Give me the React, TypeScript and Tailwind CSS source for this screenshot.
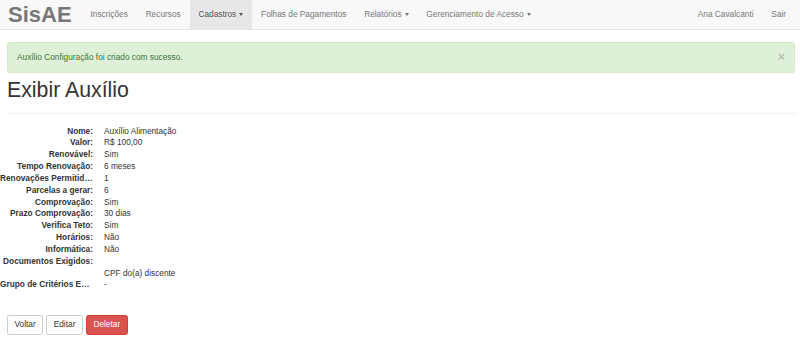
const navLeft = [
  { label: "Inscrições" },
  { label: "Recursos" },
  { label: "Cadastros", caret: true, active: true },
  { label: "Folhas de Pagamentos" },
  { label: "Relatórios", caret: true },
  { label: "Gerenciamento de Acesso", caret: true },
];

const fields: [string, string][] = [
  ["Nome:", "Auxílio Alimentação"],
  ["Valor:", "R$ 100,00"],
  ["Renovável:", "Sim"],
  ["Tempo Renovação:", "6 meses"],
  ["Renovações Permitidas:", "1"],
  ["Parcelas a gerar:", "6"],
  ["Comprovação:", "Sim"],
  ["Prazo Comprovação:", "30 dias"],
  ["Verifica Teto:", "Sim"],
  ["Horários:", "Não"],
  ["Informática:", "Não"],
  ["Documentos Exigidos:", ""],
  ["", "CPF do(a) discente"],
  ["Grupo de Critérios Especiais:", "-"],
];

function Caret() {
  return (
    <span className="ml-[3px] inline-block h-0 w-0 border-x-[2.5px] border-t-[3px] border-x-transparent border-t-current align-middle" />
  );
}

export default function App() {
  return (
    <div className="h-[342px] w-[800px] overflow-hidden bg-white font-['Liberation_Sans',Arial,sans-serif] text-[8.3px] leading-[11.85px] text-[#333]">
      <nav className="flex h-[30px] items-stretch border-b border-[#e7e7e7] bg-[#f8f8f8] pr-[5px] text-[#777]">
        <a className="flex items-center px-[8px] text-[22px] font-bold leading-none text-[#777]">SisAE</a>
        <ul className="flex items-stretch pl-[2px]">
          {navLeft.map((item) => (
            <li
              key={item.label}
              className={`flex items-center px-[8.9px] ${item.active ? "bg-[#e7e7e7] text-[#555]" : ""}`}
            >
              {item.label}
              {item.caret && <Caret />}
            </li>
          ))}
        </ul>
        <ul className="ml-auto flex items-stretch">
          <li className="flex items-center px-[8.9px]">Ana Cavalcanti</li>
          <li className="flex items-center px-[8.9px]">Sair</li>
        </ul>
      </nav>

      <div className="pl-[7px] pr-[5px]">
        <div className="mt-[12px] flex h-[31px] items-center justify-between rounded-[2.5px] border border-[#d6e9c6] bg-[#dff0d8] px-[9px] text-[#3c763d]">
          <span>Auxílio Configuração foi criado com sucesso.</span>
          <span className="text-[12.4px] font-bold leading-none text-black opacity-20">×</span>
        </div>

        <h1 className="mt-[6px] text-[21.3px] font-normal leading-[23.5px] text-[#333]">Exibir Auxílio</h1>
        <hr className="mt-[10px] border-t border-[#eee]" />
      </div>

      <dl className="mt-[12px]">
        {fields.map(([k, v], i) => (
          <div key={i} className="flex h-[11.85px]">
            <dt className="w-[93px] shrink-0 overflow-hidden text-ellipsis whitespace-nowrap text-right font-bold">
              {k}
            </dt>
            <dd className="ml-[11px]">{v}</dd>
          </div>
        ))}
      </dl>

      <div className="mt-[24px] flex gap-[3px] pl-[7px]">
        <button className="h-[20px] rounded-[2.5px] border border-[#ccc] bg-white px-[6.5px] text-[8.3px] text-[#333]">Voltar</button>
        <button className="h-[20px] rounded-[2.5px] border border-[#ccc] bg-white px-[6.5px] text-[8.3px] text-[#333]">Editar</button>
        <button className="h-[20px] rounded-[2.5px] border border-[#d43f3a] bg-[#d9534f] px-[6.5px] text-[8.3px] text-white">Deletar</button>
      </div>
    </div>
  );
}
